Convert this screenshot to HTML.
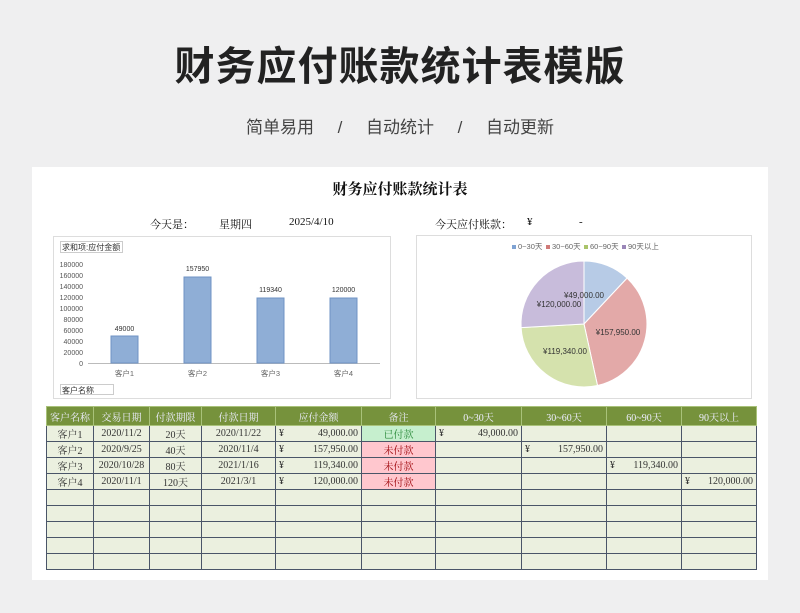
<!DOCTYPE html>
<html><head><meta charset="utf-8"><style>
*{margin:0;padding:0;box-sizing:border-box}
body{width:800px;height:613px;background:#efeff0;font-family:"Liberation Sans","Noto Sans CJK SC",sans-serif;position:relative;overflow:hidden}
.h1{position:absolute;top:34px;left:0;width:800px;text-align:center;font-size:40px;font-weight:bold;color:#222;letter-spacing:1px}
.sub{position:absolute;top:113px;left:0;width:800px;text-align:center;font-size:17px;color:#444;word-spacing:0}
.card{position:absolute;left:32px;top:167px;width:736px;height:413px;background:#fff}
.ser{font-family:"Liberation Serif","Noto Serif CJK SC",serif}
.abs{position:absolute}
table{position:absolute;left:46px;top:406px;border-collapse:collapse;font-family:"Liberation Serif","Noto Serif CJK SC",serif;font-size:10px;color:#333}
td{border:1px solid #4a5568;height:16px;background:#ebf0df;text-align:center;padding:0 3px;white-space:nowrap}
tr.hd td{background:#76923c;color:#eef;height:19px;border-color:#a9c27a}
.g{background:#c6efce!important;color:#2a8a3a}
.r{background:#ffc7ce!important;color:#9c0006}
.m{text-align:left}
.m span{float:right}
</style></head><body>
<div class="h1">财务应付账款统计表模版</div>
<div class="sub">简单易用&nbsp;&nbsp;&nbsp;&nbsp;&nbsp;/&nbsp;&nbsp;&nbsp;&nbsp;&nbsp;自动统计&nbsp;&nbsp;&nbsp;&nbsp;&nbsp;/&nbsp;&nbsp;&nbsp;&nbsp;&nbsp;自动更新</div>
<div class="card"></div>
<div class="abs ser" style="left:0;width:800px;top:178px;text-align:center;font-size:15px;font-weight:bold;color:#111">财务应付账款统计表</div>
<div class="abs ser" style="top:216px;left:150px;font-size:11px;color:#111">今天是：</div>
<div class="abs ser" style="top:216px;left:219px;font-size:11px;color:#111">星期四</div>
<div class="abs ser" style="top:216px;left:289px;font-size:11px;color:#111">2025/4/10</div>
<div class="abs ser" style="top:216px;left:435px;font-size:11px;color:#111">今天应付账款：</div>
<div class="abs ser" style="top:216px;left:527px;font-size:11px;color:#111">¥</div>
<div class="abs ser" style="top:216px;left:579px;font-size:11px;color:#111">-</div>

<svg class="abs" style="left:53px;top:236px" width="338" height="163" viewBox="53 236 338 163" font-family="Liberation Sans,Noto Sans CJK SC,sans-serif">
<rect x="53.5" y="236.5" width="337" height="162" fill="#fff" stroke="#ddd"/>
<rect x="60.5" y="241.5" width="62" height="11" fill="#fff" stroke="#ccc"/>
<text x="62" y="250" font-size="8" fill="#333">求和项:应付金额</text>
<g font-size="7" fill="#555" text-anchor="end">
<text x="83" y="267">180000</text><text x="83" y="278">160000</text><text x="83" y="289">140000</text><text x="83" y="300">120000</text><text x="83" y="311">100000</text><text x="83" y="322">80000</text><text x="83" y="333">60000</text><text x="83" y="344">40000</text><text x="83" y="355">20000</text><text x="83" y="366">0</text>
</g>
<line x1="88" y1="363.5" x2="380" y2="363.5" stroke="#bbb"/>
<g fill="#8faed6" stroke="#6f93c4">
<rect x="111" y="336" width="27" height="27"/><rect x="184" y="277" width="27" height="86"/><rect x="257" y="298" width="27" height="65"/><rect x="330" y="298" width="27" height="65"/>
</g>
<g font-size="7" fill="#333" text-anchor="middle">
<text x="124.5" y="331">49000</text><text x="197.5" y="271">157950</text><text x="270.5" y="292">119340</text><text x="343.5" y="292">120000</text>
</g>
<g font-size="7.5" fill="#666" text-anchor="middle">
<text x="124.5" y="376">客户1</text><text x="197.5" y="376">客户2</text><text x="270.5" y="376">客户3</text><text x="343.5" y="376">客户4</text>
</g>
<rect x="60.5" y="384.5" width="53" height="10" fill="#fff" stroke="#ccc"/>
<text x="62" y="393" font-size="8" fill="#333">客户名称</text>
</svg>

<svg class="abs" style="left:416px;top:235px" width="336" height="164" viewBox="416 235 336 164" font-family="Liberation Sans,Noto Sans CJK SC,sans-serif">
<rect x="416.5" y="235.5" width="335" height="163" fill="#fff" stroke="#ddd"/>
<g font-size="7.5" fill="#666">
<rect x="512" y="245" width="4" height="4" fill="#7fa3d3"/><text x="518" y="249">0~30天</text>
<rect x="546" y="245" width="4" height="4" fill="#d07a78"/><text x="552" y="249">30~60天</text>
<rect x="584" y="245" width="4" height="4" fill="#aac46a"/><text x="590" y="249">60~90天</text>
<rect x="622" y="245" width="4" height="4" fill="#9a86b8"/><text x="628" y="249">90天以上</text>
</g>
<g stroke="#fff" stroke-width="1">
<path d="M584,324 L584,261 A63,63 0 0,1 627.1,278.1 Z" fill="#b7cbe6"/>
<path d="M584,324 L627.1,278.1 A63,63 0 0,1 597.5,385.5 Z" fill="#e3a9a8"/>
<path d="M584,324 L597.5,385.5 A63,63 0 0,1 521.1,327.6 Z" fill="#d5e2ad"/>
<path d="M584,324 L521.1,327.6 A63,63 0 0,1 584,261 Z" fill="#c8bcdb"/>
</g>
<g font-size="8" fill="#333" text-anchor="middle">
<text x="584" y="298">¥49,000.00</text><text x="618" y="335">¥157,950.00</text><text x="565" y="354">¥119,340.00</text><text x="559" y="307">¥120,000.00</text>
</g>
</svg>

<table>
<tr class="hd"><td style="width:45px">客户名称</td><td style="width:56px">交易日期</td><td style="width:52px">付款期限</td><td style="width:74px">付款日期</td><td style="width:86px">应付金额</td><td style="width:74px">备注</td><td style="width:86px">0~30天</td><td style="width:85px">30~60天</td><td style="width:75px">60~90天</td><td style="width:75px">90天以上</td></tr>
<tr><td>客户1</td><td>2020/11/2</td><td>20天</td><td>2020/11/22</td><td class="m">¥<span>49,000.00</span></td><td class="g">已付款</td><td class="m">¥<span>49,000.00</span></td><td></td><td></td><td></td></tr>
<tr><td>客户2</td><td>2020/9/25</td><td>40天</td><td>2020/11/4</td><td class="m">¥<span>157,950.00</span></td><td class="r">未付款</td><td></td><td class="m">¥<span>157,950.00</span></td><td></td><td></td></tr>
<tr><td>客户3</td><td>2020/10/28</td><td>80天</td><td>2021/1/16</td><td class="m">¥<span>119,340.00</span></td><td class="r">未付款</td><td></td><td></td><td class="m">¥<span>119,340.00</span></td><td></td></tr>
<tr><td>客户4</td><td>2020/11/1</td><td>120天</td><td>2021/3/1</td><td class="m">¥<span>120,000.00</span></td><td class="r">未付款</td><td></td><td></td><td></td><td class="m">¥<span>120,000.00</span></td></tr>
<tr><td></td><td></td><td></td><td></td><td></td><td></td><td></td><td></td><td></td><td></td></tr>
<tr><td></td><td></td><td></td><td></td><td></td><td></td><td></td><td></td><td></td><td></td></tr>
<tr><td></td><td></td><td></td><td></td><td></td><td></td><td></td><td></td><td></td><td></td></tr>
<tr><td></td><td></td><td></td><td></td><td></td><td></td><td></td><td></td><td></td><td></td></tr>
<tr><td style="height:14px"></td><td></td><td></td><td></td><td></td><td></td><td></td><td></td><td></td><td></td></tr>
</table>
</body></html>
